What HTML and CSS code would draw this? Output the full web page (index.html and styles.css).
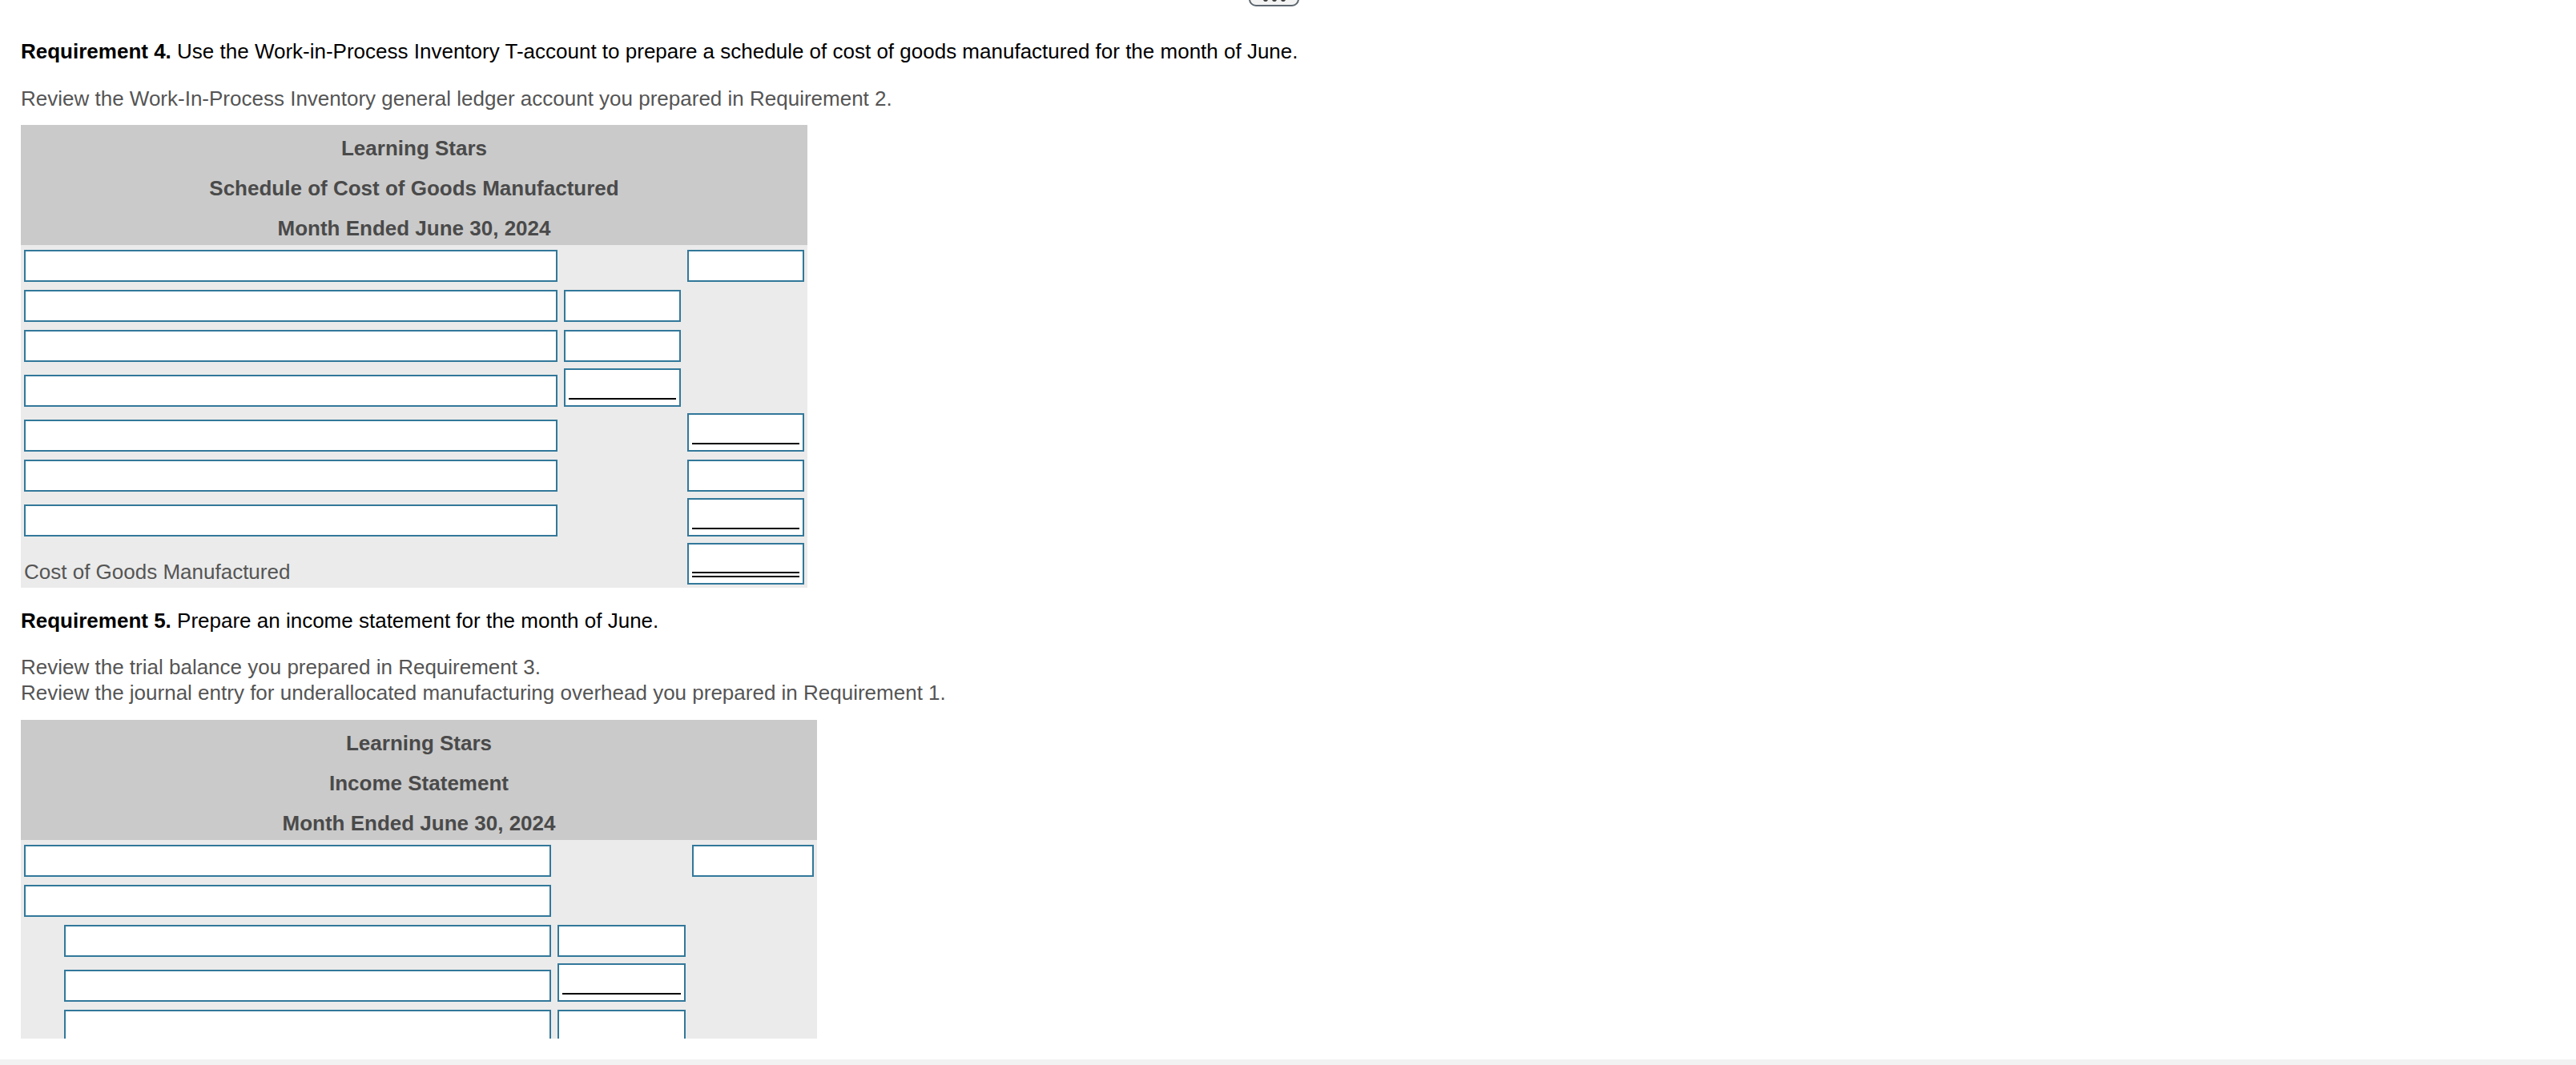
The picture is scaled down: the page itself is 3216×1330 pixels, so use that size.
FILE: index.html
```html
<!DOCTYPE html>
<html lang="en">
<head>
<meta charset="utf-8">
<title>Learning Stars - Requirements 4 and 5</title>
<link rel="stylesheet" href="styles.css">
</head>
<body>
<div class="viewport">
  <div class="content">
    <div class="toolbar">
      <div class="more-btn" aria-label="More"><span class="dot"></span><span class="dot"></span><span class="dot"></span></div>
    </div>

    <p class="req req-first"><b>Requirement 4.</b> Use the Work-in-Process Inventory T-account to prepare a schedule of cost of goods manufactured for the month of June.</p>
    <p class="note note-first">Review the Work-In-Process Inventory general ledger account you prepared in Requirement 2.</p>

    <div class="sheet sheet-cogm">
      <div class="sheet-head">
        <div class="head-line">Learning Stars</div>
        <div class="head-line">Schedule of Cost of Goods Manufactured</div>
        <div class="head-line">Month Ended June 30, 2024</div>
      </div>
      <div class="sheet-body">
        <div class="row">
          <div class="field"></div>
          <div class="cell"></div>
          <div class="field"></div>
        </div>
        <div class="row">
          <div class="field"></div>
          <div class="field"></div>
          <div class="cell"></div>
        </div>
        <div class="row">
          <div class="field"></div>
          <div class="field"></div>
          <div class="cell"></div>
        </div>
        <div class="row row-tall">
          <div class="field"></div>
          <div class="field field-u"><span class="rule"></span></div>
          <div class="cell"></div>
        </div>
        <div class="row row-tall">
          <div class="field"></div>
          <div class="cell"></div>
          <div class="field field-u"><span class="rule"></span></div>
        </div>
        <div class="row">
          <div class="field"></div>
          <div class="cell"></div>
          <div class="field"></div>
        </div>
        <div class="row row-tall">
          <div class="field"></div>
          <div class="cell"></div>
          <div class="field field-u"><span class="rule"></span></div>
        </div>
        <div class="row row-tall">
          <div class="label">Cost of Goods Manufactured</div>
          <div class="cell"></div>
          <div class="field field-uu"><span class="rule rule-double"></span></div>
        </div>
      </div>
    </div>

    <p class="req req-second"><b>Requirement 5.</b> Prepare an income statement for the month of June.</p>
    <p class="note note-second">Review the trial balance you prepared in Requirement 3.<br>Review the journal entry for underallocated manufacturing overhead you prepared in Requirement 1.</p>

    <div class="sheet sheet-income">
      <div class="sheet-head">
        <div class="head-line">Learning Stars</div>
        <div class="head-line">Income Statement</div>
        <div class="head-line">Month Ended June 30, 2024</div>
      </div>
      <div class="sheet-body">
        <div class="row">
          <div class="field"></div>
          <div class="cell"></div>
          <div class="field"></div>
        </div>
        <div class="row">
          <div class="field"></div>
          <div class="cell"></div>
          <div class="cell"></div>
        </div>
        <div class="row">
          <div class="field indent"></div>
          <div class="field"></div>
          <div class="cell"></div>
        </div>
        <div class="row row-tall">
          <div class="field indent"></div>
          <div class="field field-u"><span class="rule"></span></div>
          <div class="cell"></div>
        </div>
        <div class="row">
          <div class="field indent"></div>
          <div class="field"></div>
          <div class="cell"></div>
        </div>
        <div class="row row-tall">
          <div class="field indent"></div>
          <div class="field field-u"><span class="rule"></span></div>
          <div class="cell"></div>
        </div>
        <div class="row row-tall">
          <div class="field"></div>
          <div class="cell"></div>
          <div class="field field-u"><span class="rule"></span></div>
        </div>
        <div class="row row-tall">
          <div class="field"></div>
          <div class="cell"></div>
          <div class="field field-uu"><span class="rule rule-double"></span></div>
        </div>
      </div>
    </div>
  </div>
  <div class="bottom-gap"></div>
  <div class="footer-bar"></div>
</div>
</body>
</html>
```

FILE: styles.css
```css
* {
  box-sizing: border-box;
}

html, body {
  margin: 0;
  padding: 0;
  background: #ffffff;
}

body {
  font-family: "Liberation Sans", Arial, Helvetica, sans-serif;
  font-size: 26px;
  line-height: 32.5px;
  color: #000000;
}

.viewport {
  width: 100%;
}

.content {
  height: 1297px;
  overflow: hidden;
  padding-left: 26px;
}

/* top toolbar (only the bottom edge of the button is visible) */
.toolbar {
  width: 1596px;
  height: 8px;
  display: flex;
  justify-content: flex-end;
  align-items: flex-end;
  overflow: hidden;
}

.more-btn {
  flex: none;
  width: 63px;
  height: 40px;
  border: 2px solid #5d6770;
  border-radius: 9px;
  background: #f3f3f3;
  display: flex;
  justify-content: center;
  align-items: flex-end;
  gap: 5px;
  padding-bottom: 4px;
}

.dot {
  width: 6px;
  height: 6px;
  border-radius: 50%;
  background: #3c3c3c;
}

/* text blocks */
p {
  margin: 0;
}

.req {
  color: #000000;
}

.req b {
  font-weight: bold;
}

.req-first {
  margin-top: 40px;
}

.note {
  color: #555555;
}

.note-first {
  margin-top: 26px;
}

.req-second {
  margin-top: 25px;
}

.note-second {
  margin-top: 25px;
}

/* schedule sheets */
.sheet {
  margin-top: 17px;
}

.sheet-cogm {
  width: 982px;
}

.sheet-income {
  width: 994px;
}

.sheet-head {
  height: 150px;
  background: #cacaca;
  padding-top: 13px;
  display: flex;
  flex-direction: column;
  gap: 17.5px;
  text-align: center;
  font-weight: bold;
  color: #4a4a4a;
}

.sheet-body {
  background: #ebebeb;
  padding: 6px 4px 4px;
}

.row {
  display: grid;
  column-gap: 8px;
  align-items: end;
  margin-top: 10px;
}

.row:first-child {
  margin-top: 0;
}

.row.row-tall {
  margin-top: 8px;
}

.sheet-cogm .row {
  grid-template-columns: 666px 146px 146px;
}

.sheet-income .row {
  grid-template-columns: 658px 160px 152px;
}

.field {
  height: 40px;
  border: 2px solid #32789a;
  background: #ffffff;
}

.field.indent {
  margin-left: 50px;
}

.field-u,
.field-uu {
  display: flex;
  align-items: flex-end;
  padding: 0 4px 7px;
}

.field-u {
  height: 48px;
}

.field-uu {
  height: 52px;
}

.rule {
  flex: 1;
  height: 2px;
  background: #000000;
}

.rule.rule-double {
  height: 7px;
  background: transparent;
  border-top: 2px solid #000000;
  border-bottom: 2px solid #000000;
}

.label {
  color: #555555;
  white-space: nowrap;
}

.bottom-gap {
  height: 26px;
  background: #ffffff;
}

.footer-bar {
  height: 40px;
  background: #f2f2f2;
}
```
